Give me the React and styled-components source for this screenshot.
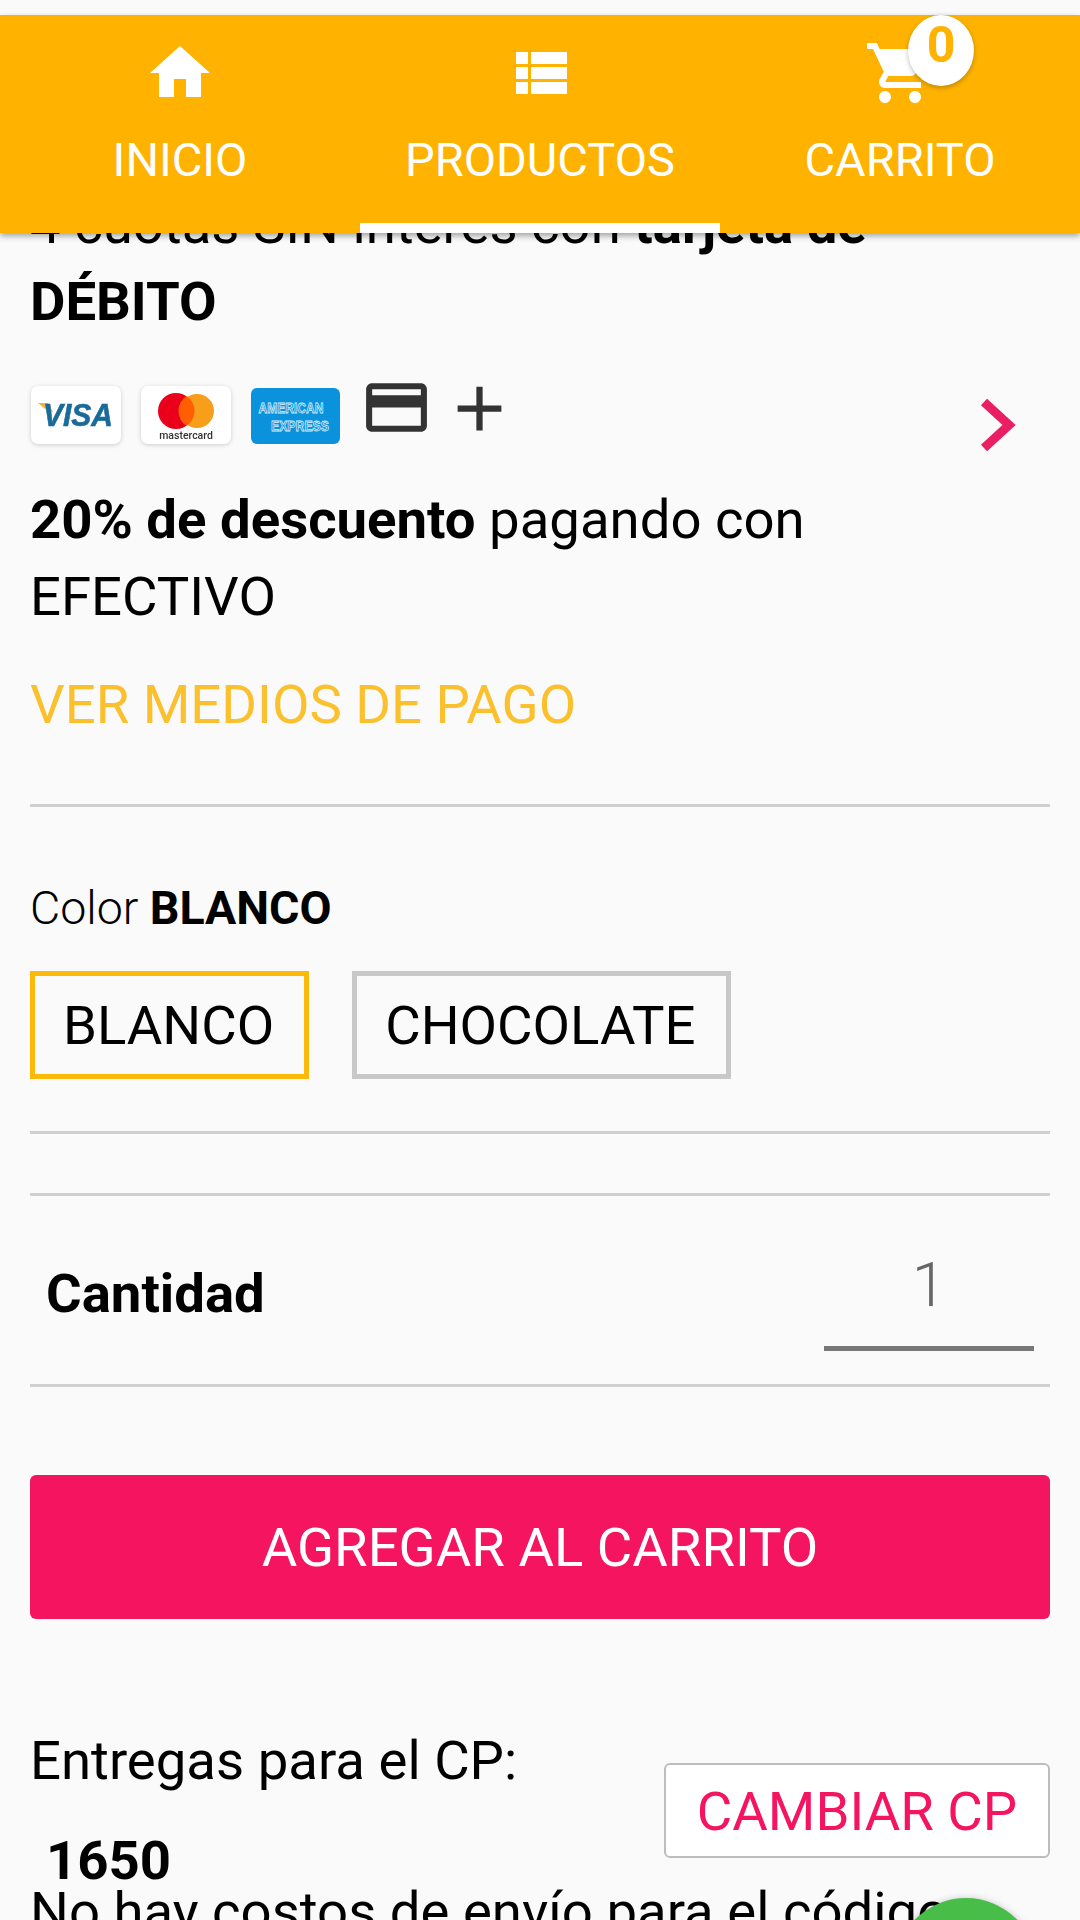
import React from "react";
import styled, { createGlobalStyle } from "styled-components";

const Global = createGlobalStyle`
  html, body { margin: 0; padding: 0; background: #fafafa; }
  body { font-family: Roboto, "Liberation Sans", sans-serif; color: #000; }
  * { box-sizing: border-box; }
`;

const Page = styled.div`
  position: relative;
  width: 1080px;
  height: 1920px;
  overflow: hidden;
  background: #fafafa;
`;

const Nav = styled.nav`
  position: absolute;
  top: 15px;
  left: 0;
  width: 1080px;
  height: 218px;
  background: #ffb300;
  display: grid;
  grid-template-columns: repeat(3, 360px);
  box-shadow: 0 3px 6px rgba(0, 0, 0, 0.35);
  z-index: 2;
`;

const Tab = styled.div`
  position: relative;
  display: flex;
  flex-direction: column;
  align-items: center;
  padding-top: 22px;
  color: #fff;
  border-bottom: ${(p) => (p.$active ? "10px solid #fff" : "0")};
`;

const TabIcon = styled.svg`
  width: 72px;
  height: 72px;
  fill: #fff;
  display: block;
`;

const TabLabel = styled.span`
  margin-top: 23px;
  font-size: 47px;
  line-height: 56px;
  font-weight: 400;
`;

const Badge = styled.span`
  position: absolute;
  top: 0;
  left: 188px;
  width: 66px;
  height: 71px;
  padding-bottom: 12px;
  border-radius: 50%;
  background: #fff;
  color: #ffb300;
  font-size: 50px;
  font-weight: 700;
  display: flex;
  align-items: center;
  justify-content: center;
  box-shadow: 0 2px 5px rgba(0, 0, 0, 0.25);
`;

const Content = styled.main`
  padding: 186px 30px 0;
`;

const Text = styled.p`
  margin: 0;
  font-size: 54.5px;
  line-height: 77px;
`;

const Strong = styled.b`
  font-weight: 700;
`;

const PayRow = styled.div`
  display: flex;
  align-items: flex-start;
  margin-top: 45px;
  height: 62px;
  position: relative;
`;

const Card = styled.svg`
  width: 92px;
  height: 60px;
  margin-right: 18px;
  display: block;
  flex: none;
  filter: drop-shadow(0 1px 2px rgba(0, 0, 0, 0.18));
`;

const SmallIcon = styled.svg`
  width: ${(p) => p.$w}px;
  height: ${(p) => p.$w}px;
  margin: -14px ${(p) => p.$mr}px 0 0;
  fill: #333;
  flex: none;
`;

const Chevron = styled.svg`
  position: absolute;
  right: 34px;
  top: 13px;
  width: 36px;
  height: 54px;
`;

const PayText = styled(Text)`
  margin-top: 34px;
`;

const PayLink = styled.a`
  display: block;
  margin-top: 37px;
  color: #fbc02d;
  font-size: 54.5px;
  line-height: 64px;
`;

const Rule = styled.hr`
  margin: ${(p) => p.$top}px 0 -1px;
  border: 0;
  height: 3px;
  background: #d0d0d0;
`;

const ColorLabel = styled.div`
  margin-top: 75px;
  font-size: 46.5px;
  line-height: 54px;
  font-weight: 300;
`;

const Options = styled.div`
  display: flex;
  gap: 43px;
  margin-top: 36px;
`;

const Option = styled.div`
  height: 108px;
  padding: 0 30px 0 28px;
  border: 5px solid ${(p) => (p.$selected ? "#fbb909" : "#c8c8c8")};
  display: flex;
  align-items: center;
  font-size: 54.5px;
`;

const QtyRow = styled.div`
  display: flex;
  justify-content: space-between;
  height: 189px;
  padding: 0 16px;
  align-items: flex-start;
`;

const QtyLabel = styled.span`
  margin-top: 66px;
  font-size: 54.5px;
  line-height: 64px;
  font-weight: 700;
`;

const QtyField = styled.div`
  width: 210px;
  height: 156px;
  border-bottom: 5px solid #777;
  text-align: center;
  color: #666;
  font-size: 62px;
  line-height: 66px;
  font-weight: 300;
  padding-top: 57px;
`;

const AddButton = styled.button`
  display: block;
  width: 100%;
  height: 144px;
  margin-top: 89px;
  border: 0;
  border-radius: 6px;
  background: #f5145f;
  color: #fff;
  font-family: inherit;
  font-size: 54.5px;
`;

const Delivery = styled.section`
  position: relative;
  margin-top: 110px;
`;

const DeliveryText = styled.div`
  font-size: 54.5px;
  line-height: 62px;
`;

const PostCode = styled.div`
  margin: 38px 0 0 16px;
  font-size: 54.5px;
  line-height: 62px;
  font-weight: 700;
`;

const ShipText = styled.div`
  margin-top: -10px;
  font-size: 54.5px;
  line-height: 60px;
  white-space: nowrap;
`;

const ChangeButton = styled.button`
  position: absolute;
  top: 34px;
  right: 0;
  width: 386px;
  height: 95px;
  background: #fff;
  border: 2px solid #bdbdbd;
  border-radius: 6px;
  color: #f5145f;
  font-family: inherit;
  font-size: 54.5px;
  padding: 0;
`;

const Whatsapp = styled.div`
  position: absolute;
  left: 895px;
  top: 1898px;
  width: 142px;
  height: 142px;
  border-radius: 50%;
  background: #48be48;
  box-shadow: 0 2px 8px rgba(0, 0, 0, 0.3);
  z-index: 1;
`;

const Visa = () => (
  <Card viewBox="0 0 92 60">
    <rect x="1" y="1" width="90" height="58" rx="7" fill="#fff" />
    <path d="M8 18h10l5 9-3 1z" fill="#f3b23a" />
    <text x="48" y="41" textAnchor="middle" fontFamily="Liberation Sans" fontStyle="italic" fontWeight="700" fontSize="31" fill="#1a6a9a" stroke="#1a6a9a" strokeWidth="0.6" textLength="70" lengthAdjust="spacingAndGlyphs">VISA</text>
  </Card>
);

const Master = () => (
  <Card viewBox="0 0 92 60">
    <rect x="1" y="1" width="90" height="58" rx="7" fill="#fff" />
    <circle cx="36" cy="26" r="18" fill="#eb001b" />
    <circle cx="57" cy="26" r="17" fill="#f79e1b" />
    <path d="M46.500 11a18 18 0 0 1 0 30a18 18 0 0 1 0-30z" fill="#ff5f00" />
    <text x="46" y="54" textAnchor="middle" fontFamily="Roboto" fontSize="10.500" fontWeight="500" fill="#333">mastercard</text>
  </Card>
);

const Amex = () => (
  <Card viewBox="0 0 92 60" style={{ filter: "none" }}>
    <rect x="1" y="3" width="89" height="56" rx="6" fill="#0b92dc" />
    <text x="41" y="28" textAnchor="middle" fontFamily="Liberation Sans" fontWeight="700" fontSize="15" fill="#0b92dc" stroke="#d6effb" strokeWidth="0.8" textLength="65" lengthAdjust="spacingAndGlyphs">AMERICAN</text>
    <text x="50" y="46" textAnchor="middle" fontFamily="Liberation Sans" fontWeight="700" fontSize="15" fill="#0b92dc" stroke="#d6effb" strokeWidth="0.8" textLength="58" lengthAdjust="spacingAndGlyphs">EXPRESS</text>
  </Card>
);

export default function App() {
  return (
    <Page>
      <Global />
      <Nav>
        <Tab>
          <TabIcon viewBox="0 0 24 24"><path d="M10 20v-6h4v6h5v-8h3L12 3 2 12h3v8z" /></TabIcon>
          <TabLabel>INICIO</TabLabel>
        </Tab>
        <Tab $active>
          <TabIcon viewBox="0 0 24 24"><path d="M4 14h4v-4H4v4zm0 5h4v-4H4v4zM4 9h4V5H4v4zm5 5h12v-4H9v4zm0 5h12v-4H9v4zM9 5v4h12V5H9z" /></TabIcon>
          <TabLabel>PRODUCTOS</TabLabel>
        </Tab>
        <Tab>
          <TabIcon viewBox="0 0 24 24"><path d="M7 18c-1.100 0-1.990.9-1.990 2S5.900 22 7 22s2-.9 2-2-.9-2-2-2zM1 2v2h2l3.600 7.590-1.350 2.450c-.16.280-.25.610-.25.960 0 1.100.9 2 2 2h12v-2H7.420c-.14 0-.25-.11-.25-.25l.03-.12.9-1.630h7.450c.75 0 1.410-.41 1.750-1.030l3.580-6.490A1 1 0 0 0 20 4H5.210l-.94-2H1zm16 16c-1.100 0-1.990.9-1.990 2s.89 2 1.990 2 2-.9 2-2-.9-2-2-2z" /></TabIcon>
          <TabLabel>CARRITO</TabLabel>
          <Badge>0</Badge>
        </Tab>
      </Nav>
      <Content>
        <Text>4 cuotas SIN interés con <Strong>tarjeta de DÉBITO</Strong></Text>
        <PayRow>
          <Visa />
          <Master />
          <Amex />
          <SmallIcon $w={73} $mr={9} viewBox="0 0 24 24"><path d="M20 4H4c-1.110 0-1.990.89-1.990 2L2 18c0 1.110.89 2 2 2h16c1.110 0 2-.89 2-2V6c0-1.110-.89-2-2-2zm0 14H4v-6h16v6zm0-10H4V6h16v2z" /></SmallIcon>
          <SmallIcon $w={75} $mr={0} viewBox="0 0 24 24"><path d="M19 13h-6v6h-2v-6H5v-2h6V5h2v6h6v2z" /></SmallIcon>
          <Chevron viewBox="0 0 36 54"><path d="M4 4l25 23L4 50" fill="none" stroke="#e91e63" strokeWidth="9" /></Chevron>
        </PayRow>
        <PayText><Strong>20% de descuento</Strong> pagando con EFECTIVO</PayText>
        <PayLink>VER MEDIOS DE PAGO</PayLink>
        <Rule $top={68} />
        <ColorLabel>Color <Strong>BLANCO</Strong></ColorLabel>
        <Options>
          <Option $selected>BLANCO</Option>
          <Option>CHOCOLATE</Option>
        </Options>
        <Rule $top={52} />
        <Rule $top={60} />
        <QtyRow>
          <QtyLabel>Cantidad</QtyLabel>
          <QtyField>1</QtyField>
        </QtyRow>
        <Rule $top={0} />
        <AddButton>AGREGAR AL CARRITO</AddButton>
        <Delivery>
          <DeliveryText>Entregas para el CP:</DeliveryText>
          <PostCode>1650</PostCode>
          <ShipText>No hay costos de envío para el código</ShipText>
          <ChangeButton>CAMBIAR CP</ChangeButton>
        </Delivery>
      </Content>
      <Whatsapp />
    </Page>
  );
}
